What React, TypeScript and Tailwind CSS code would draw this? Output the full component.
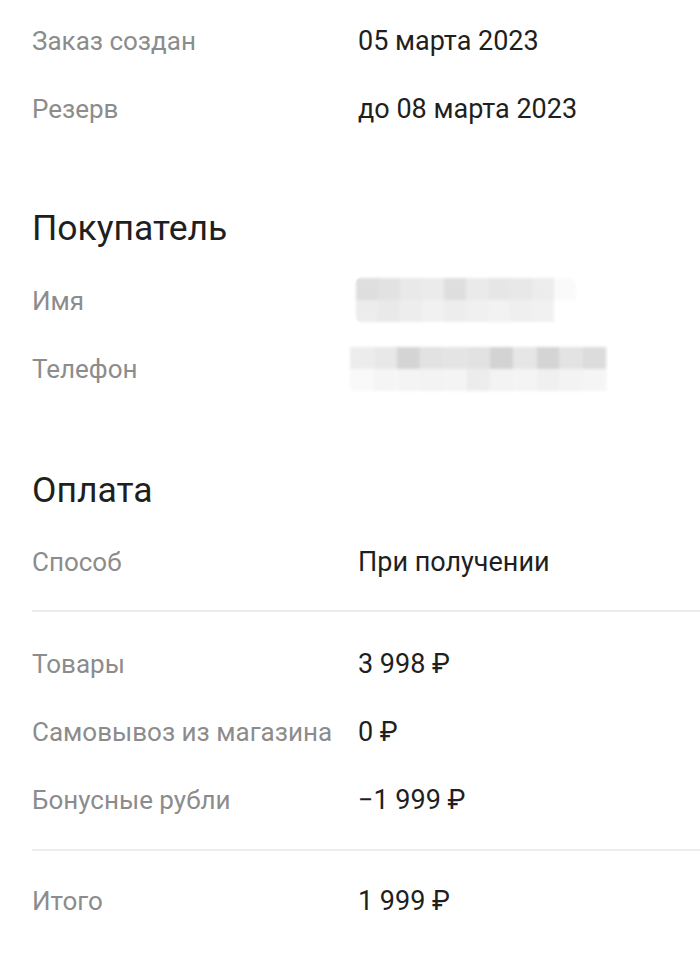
import React from "react";

type Row = { label: string; value?: React.ReactNode };

const font = { fontFamily: "Roboto, 'Noto Sans', sans-serif" };

const InfoRow: React.FC<Row> = ({ label, value }) => (
  <div className="flex h-[68px] items-center">
    <div className="w-[326px] shrink-0 text-[26px] text-[#8c8c8c]">{label}</div>
    <div className="text-[27px] text-[#1f1f1f]">{value}</div>
  </div>
);

const Pixelated: React.FC<{ cells: string[][]; w: number; h: number; cell: number }> = ({ cells, w, h, cell }) => (
  <svg width={w} height={h} viewBox={`0 0 ${w} ${h}`}>
    <defs>
      <filter id={`b${w}`} x="-10%" y="-20%" width="120%" height="140%">
        <feGaussianBlur stdDeviation="1.6" />
      </filter>
    </defs>
    <g filter={`url(#b${w})`}>
      {cells.map((row, r) =>
        row.map((c, i) => (
          <rect key={`${r}-${i}`} x={4 + i * cell} y={4 + r * 22} width={cell} height={22} fill={c} />
        ))
      )}
    </g>
  </svg>
);

const nameCells = [
  ["#dedede", "#e2e2e2", "#e9e9e9", "#ebebeb", "#dedede", "#eaeaea", "#e6e6e6", "#e8e8e8", "#ececec", "#fafafa"],
  ["#ececec", "#e9e9e9", "#ededed", "#f1f1f1", "#ededed", "#f0f0f0", "#f2f2f2", "#efefef", "#f1f1f1", "#ffffff"],
];

const phoneCells = [
  ["#ececec", "#e8e8e8", "#d4d4d4", "#e2e2e2", "#e4e4e4", "#e2e2e2", "#d3d3d3", "#e6e6e6", "#d4d4d4", "#e3e3e3", "#dcdcdc"],
  ["#f9f9f9", "#f5f5f5", "#f4f4f4", "#f3f3f3", "#f4f4f4", "#ececec", "#f3f3f3", "#f4f4f4", "#f0f0f0", "#f3f3f3", "#f5f5f5"],
];

const Heading: React.FC<{ children: React.ReactNode; className?: string }> = ({ children, className }) => (
  <div className={`flex h-[56px] items-center text-[35.5px] text-[#1f1f1f] ${className ?? ""}`}>{children}</div>
);

export default function App() {
  return (
    <div className="min-h-[965px] w-[700px] bg-white pl-8 pt-[7px]" style={font}>
      <InfoRow label="Заказ создан" value="05 марта 2023" />
      <InfoRow label="Резерв" value="до 08 марта 2023" />

      <Heading className="mb-[10px] mt-[58px]">Покупатель</Heading>
      <div className="flex h-[68px] items-center">
        <div className="w-[320px] shrink-0 text-[26px] text-[#8c8c8c]">Имя</div>
        <div className="-mt-[2px] overflow-hidden rounded-[18px]">
          <Pixelated cells={nameCells} w={226} h={52} cell={22} />
        </div>
      </div>
      <div className="flex h-[68px] items-center">
        <div className="w-[314px] shrink-0 text-[26px] text-[#8c8c8c]">Телефон</div>
        <Pixelated cells={phoneCells} w={262} h={52} cell={23.3} />
      </div>

      <Heading className="mb-[9px] mt-[60px]">Оплата</Heading>
      <InfoRow label="Способ" value="При получении" />
      <div className="mt-[14px] h-[2px] bg-[#ececec]" />

      <div className="mt-[18px]">
        <InfoRow label="Товары" value="3 998 ₽" />
        <InfoRow label="Самовывоз из магазина" value="0 ₽" />
        <InfoRow label="Бонусные рубли" value="−1 999 ₽" />
      </div>
      <div className="mt-[15px] h-[2px] bg-[#ececec]" />

      <div className="mt-[16px]">
        <InfoRow label="Итого" value="1 999 ₽" />
      </div>
    </div>
  );
}
